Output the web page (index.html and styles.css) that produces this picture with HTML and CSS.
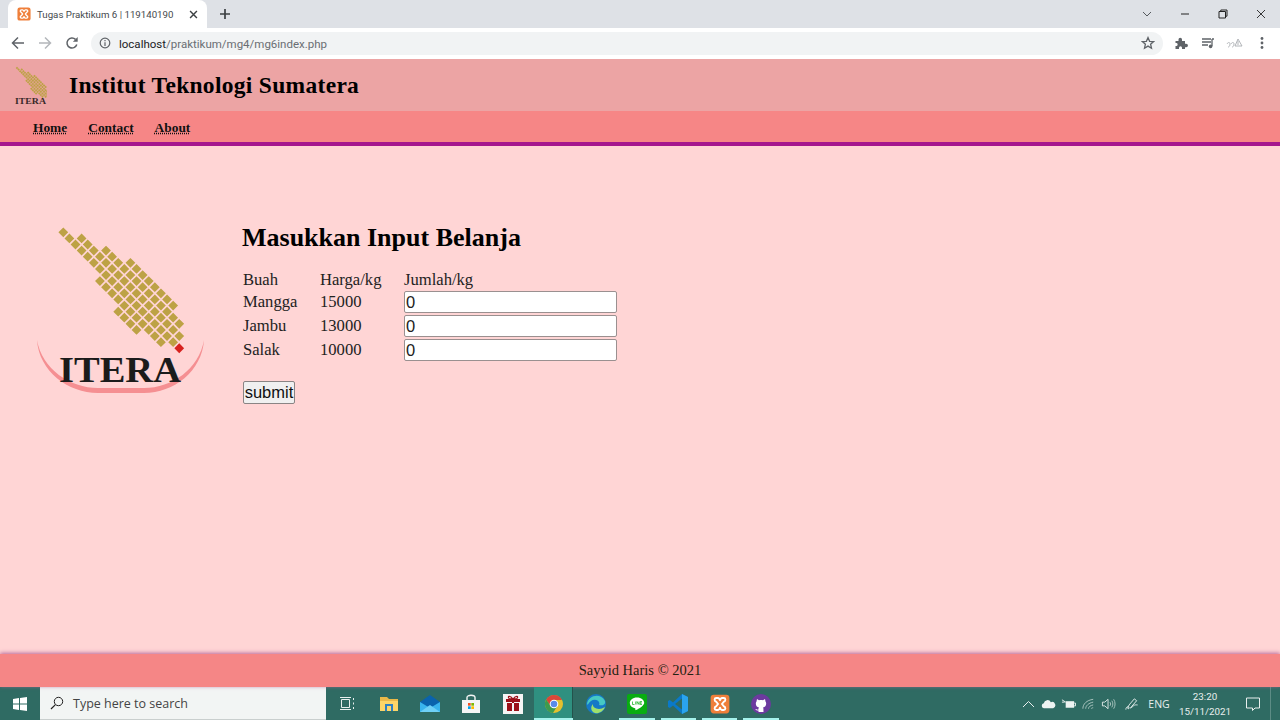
FILE: index.html
```html
<!DOCTYPE html>
<html lang="id">
<head>
<meta charset="utf-8">
<title>Tugas Praktikum 6 | 119140190</title>
<link rel="stylesheet" href="styles.css">
</head>
<body>
<svg class="defs" width="0" height="0" aria-hidden="true">
  <defs>
    <symbol id="xampp" viewBox="0 0 16 16">
      <rect x="0.5" y="0.5" width="15" height="15" rx="2.5" fill="#ef7f3a"/>
      <path d="M5 3.2H6.5C7.6 3.2 7.6 5 8 5S8.4 3.2 9.5 3.2H11C12.6 3.2 12.9 5.6 11 6.2L9.6 8L11 9.8C12.9 10.4 12.6 12.8 11 12.8H9.5C8.4 12.8 8.4 11 8 11S7.6 12.8 6.5 12.8H5C3.4 12.8 3.1 10.4 5 9.8L6.4 8L5 6.2C3.1 5.6 3.4 3.2 5 3.2Z" fill="none" stroke="#fff" stroke-width="1.5"/>
    </symbol>
    <path id="leafcells" d="M7.6-3H15.4M4.6-2H17.4M1.6-1H18.4M-.4 0H18.4M6.6 1H17.4M10.6 2H14.4" fill="none" stroke="#bda245" stroke-width=".8" stroke-dasharray=".8 .2"/>
  </defs>
</svg>

<div class="tabstrip">
  <div class="tab">
    <svg class="favicon"><use href="#xampp"/></svg>
    <span class="tab-title">Tugas Praktikum 6 | 119140190</span>
    <svg class="tab-close" viewBox="0 0 10 10"><path d="M1.2 1.2L8.8 8.8M8.8 1.2L1.2 8.8" stroke="#3c4043" stroke-width="1.6"/></svg>
  </div>
  <svg class="new-tab" viewBox="0 0 12 12"><path d="M6 1V11M1 6H11" stroke="#3c4043" stroke-width="1.7"/></svg>
  <div class="win-controls">
    <svg class="win-btn chevron" viewBox="0 0 10 10"><path d="M1 3L5 7L9 3" fill="none" stroke="#55595e" stroke-width="1"/></svg>
    <svg class="win-btn" viewBox="0 0 10 10"><path d="M1 5H9" stroke="#222" stroke-width="1"/></svg>
    <svg class="win-btn" viewBox="0 0 10 10"><path d="M1 2.5H7.5V9H1ZM2.8 2.5V1H9V7.2H7.5" fill="none" stroke="#222" stroke-width="1"/></svg>
    <svg class="win-btn" viewBox="0 0 10 10"><path d="M1 1L9 9M9 1L1 9" stroke="#222" stroke-width=".9"/></svg>
  </div>
</div>

<div class="toolbar">
  <svg class="nav-ico" viewBox="0 0 14 14"><path d="M13 7H2M7 1.5L1.5 7L7 12.5" fill="none" stroke="#5f6368" stroke-width="1.5"/></svg>
  <svg class="nav-ico" viewBox="0 0 14 14"><path d="M1 7H12M7 1.5L12.5 7L7 12.5" fill="none" stroke="#b4b7bb" stroke-width="1.5"/></svg>
  <svg class="nav-ico" viewBox="0 0 14 14"><path d="M11.8 8.5A5 5 0 1 1 10.5 3.4" fill="none" stroke="#5f6368" stroke-width="1.5"/><path d="M12.7 1V5.8H7.9Z" fill="#5f6368"/></svg>
  <div class="omnibox">
    <svg class="info" viewBox="0 0 12 12"><circle cx="6" cy="6" r="4.8" fill="none" stroke="#5f6368" stroke-width="1.2"/><path d="M6 5.2V9M6 3V4.3" stroke="#5f6368" stroke-width="1.2"/></svg>
    <span class="url"><span class="host">localhost</span>/praktikum/mg4/mg6index.php</span>
    <svg class="star" viewBox="0 0 14 14"><path d="M7 1.6L8.6 5.3L12.6 5.6L9.6 8.2L10.5 12.2L7 10.1L3.5 12.2L4.4 8.2L1.4 5.6L5.4 5.3Z" fill="none" stroke="#5f6368" stroke-width="1.3"/></svg>
  </div>
  <div class="ext">
    <svg class="ext-ico" viewBox="0 0 14 14"><path d="M1.5 5H4.5V3.6A1.7 1.7 0 0 1 8 3.6V5H11V7.7H12.2A1.7 1.7 0 0 1 12.2 11.2H11V13H8V11.8A1.5 1.5 0 0 0 5 11.8V13H1.5V10H2.6A1.6 1.6 0 0 0 2.6 7H1.5Z" fill="#5f6368"/></svg>
    <svg class="ext-ico" viewBox="0 0 14 14"><path d="M1 3H10M1 6H10M1 9H7" stroke="#5f6368" stroke-width="1.3"/><path d="M11 3V10" stroke="#5f6368" stroke-width="1.3"/><circle cx="9.6" cy="10.4" r="1.8" fill="#5f6368"/><path d="M11 3H13" stroke="#5f6368" stroke-width="1.3"/></svg>
    <svg class="ext-ico wide" viewBox="0 0 18 14"><path d="M1 8C2 6 4 6 4 8S3 11 2 11M5 8C6 6 8 6 8 8S7 11 6 11M9 10L12 3L16 10ZM12 5V9" fill="none" stroke="#a9adb1" stroke-width=".9"/></svg>
    <svg class="ext-ico" viewBox="0 0 14 14"><circle cx="7" cy="2.5" r="1.4" fill="#5f6368"/><circle cx="7" cy="7" r="1.4" fill="#5f6368"/><circle cx="7" cy="11.5" r="1.4" fill="#5f6368"/></svg>
  </div>
</div>

<header class="site-head">
  <svg class="head-logo" viewBox="0 0 32 40">
    <use href="#leafcells" transform="translate(2 2) rotate(45) scale(2.25)"/>
    <text class="head-logo-text" x="0" y="38" textLength="31" lengthAdjust="spacingAndGlyphs">ITERA</text>
  </svg>
  <h1 class="site-title">Institut Teknologi Sumatera</h1>
</header>
<nav class="site-nav">
  <a class="nav-link" href="#">Home</a>
  <a class="nav-link" href="#">Contact</a>
  <a class="nav-link" href="#">About</a>
</nav>

<main class="content">
  <svg class="logo" viewBox="0 0 170 170">
    <path d="M1 114C3 145 32 167 62 167H108C138 167 166 145 168 114C163 143 136 162 108 162H62C34 162 6 143 1 114Z" fill="#f58f92"/>
    <use href="#leafcells" transform="translate(27.3 6.3) rotate(45) scale(8.63)"/>
    <rect x="-.4" y="-.4" width=".8" height=".8" fill="#d7221f" transform="translate(27.3 6.3) rotate(45) scale(8.63) translate(19 0)"/>
    <text class="logo-text" x="23" y="156" textLength="122" lengthAdjust="spacingAndGlyphs">ITERA</text>
  </svg>
  <form class="belanja">
    <h2 class="form-title">Masukkan Input Belanja</h2>
    <table class="items">
      <tr><td class="c1 head-cell">Buah</td><td class="c2 head-cell">Harga/kg</td><td class="head-cell">Jumlah/kg</td></tr>
      <tr><td>Mangga</td><td>15000</td><td><input class="qty" type="text" value="0"></td></tr>
      <tr><td>Jambu</td><td>13000</td><td><input class="qty" type="text" value="0"></td></tr>
      <tr><td>Salak</td><td>10000</td><td><input class="qty" type="text" value="0"></td></tr>
    </table>
    <button class="submit" type="button">submit</button>
  </form>
</main>

<footer class="site-foot">Sayyid Haris © 2021</footer>

<div class="taskbar">
  <div class="start">
    <svg class="win-logo" viewBox="0 0 14 14"><path d="M0 2L6 1.1V6.6H0ZM7 1L14 0V6.6H7ZM0 7.4H6V12.9L0 12ZM7 7.4H14V14L7 13Z" fill="#fff"/></svg>
  </div>
  <div class="search">
    <svg class="search-ico" viewBox="0 0 14 14"><circle cx="8.5" cy="5.5" r="4.2" fill="none" stroke="#222" stroke-width="1"/><path d="M5.4 8.6L1 13" stroke="#222" stroke-width="1.2"/></svg>
    <span class="search-text">Type here to search</span>
  </div>
  <div class="task-items">
    <div class="task"><svg class="task-ico" viewBox="0 0 16 16"><path d="M2.5 3.5H10.5V11.500H2.500ZM1 1.500H12M1 13.500H12M14.500 2V4M14.500 6.500V8.500M14.500 11V13" fill="none" stroke="#e8efee" stroke-width="1"/></svg></div>
    <div class="task"><svg class="task-ico big" viewBox="0 0 20 20"><path d="M1 3H8L10 5H19V17H1Z" fill="#e9b949"/><path d="M1 7H19V17H1Z" fill="#fbd568"/><path d="M6 10H14V17H12V12H8V17H6Z" fill="#2b80c4"/></svg></div>
    <div class="task"><svg class="task-ico big" viewBox="0 0 20 20"><path d="M0 8L10 1L20 8V18H0Z" fill="#0a63ad"/><path d="M0 8L10 14L20 8V18H0Z" fill="#39b4ee"/><path d="M0 18L10 11L20 18Z" fill="#6fd0f7"/></svg></div>
    <div class="task"><svg class="task-ico big" viewBox="0 0 20 20"><path d="M1 6H19V19H1Z" fill="#f4f5f5"/><path d="M6 6V3.500C6 .5 14 .5 14 3.500V6" fill="none" stroke="#f4f5f5" stroke-width="1.400"/><path d="M7 9H9.700V11.700H7Z" fill="#f25022"/><path d="M10.300 9H13V11.700H10.300Z" fill="#7fba00"/><path d="M7 12.300H9.700V15H7Z" fill="#00a4ef"/><path d="M10.300 12.300H13V15H10.300Z" fill="#ffb900"/></svg></div>
    <div class="task"><svg class="task-ico big" viewBox="0 0 20 20"><path d="M0 0H20V20H0Z" fill="#f5f5f5"/><path d="M3 5H17V8H11V9H16V17H11V9H9V17H4V9H9V8H3Z" fill="#9b1018"/><path d="M10 5C7 1 4 2 6 4.500L10 5C13 1 16 2 14 4.500Z" fill="none" stroke="#9b1018" stroke-width="1.200"/></svg></div>
    <div class="task active"><svg class="task-ico big" viewBox="0 0 20 20"><circle cx="10" cy="10" r="9" fill="#e3c02f"/><path d="M10 1A9 9 0 0 0 2.200 5.500L6.200 12L10 6H18A9 9 0 0 0 10 1Z" fill="#d8483a"/><path d="M2.200 5.500A9 9 0 0 0 9 19L12.900 12.500H7Z" fill="#3e9b4d"/><circle cx="10" cy="10" r="4.300" fill="#fff"/><circle cx="10" cy="10" r="3.300" fill="#5a8be8"/></svg></div>
    <div class="task"><svg class="task-ico big" viewBox="0 0 20 20"><circle cx="10" cy="10" r="10" fill="#1678c6"/><path d="M1 10C2 2 14-2 19 7C20 10 17 12 13 11C15 7 9 4 5 7C2 9 2 12 1 10Z" fill="#46c9c4"/><path d="M19 13C17 18 12 20 9 19C5 18 4 13 7 10C6 14 13 17 19 13Z" fill="#9fe06c"/></svg></div>
    <div class="task on"><svg class="task-ico big" viewBox="0 0 20 20"><rect width="20" height="20" rx="2" fill="#08ad11"/><path d="M10 3.500C5.600 3.500 2.800 6 2.800 9.100C2.800 11.800 5 13.800 8 14.300C8.600 14.500 8.300 15.800 8.400 16.200C9.500 16.100 14 13.400 15.600 11.700C16.700 10.600 17.200 9.800 17.200 9.100C17.200 6 14.400 3.500 10 3.500Z" fill="#fff"/><path d="M5.500 7.500V10.500H7.500M8.700 7.500V10.500M10 10.500V7.500L12 10.500V7.500M15 7.500H13.200V10.500H15M13.200 9H15" fill="none" stroke="#08ad11" stroke-width=".7"/></svg></div>
    <div class="task on"><svg class="task-ico big" viewBox="0 0 20 20"><path d="M14 0L20 3V17L14 20L5 11.500L1.800 14L0 13V7L1.800 6L5 8.500Z" fill="#0a79c9"/><path d="M14 4.500V15.500L7 10Z" fill="#2f6b63"/><path d="M14 0L20 3V17L14 20Z" fill="#2aa4ee"/></svg></div>
    <div class="task on"><svg class="task-ico big"><use href="#xampp"/></svg></div>
    <div class="task on"><svg class="task-ico big" viewBox="0 0 20 20"><circle cx="10" cy="10" r="10" fill="#6c3a9f"/><path d="M6 5L8 6.200C9.300 5.900 10.700 5.900 12 6.200L14 5L14.500 7.500C16 9.500 15 13 12 13.500C12.500 14 12.500 14.500 12.500 18H7.500V16.500C5.500 17 5 15.500 4.200 15C5.500 15 6 16 7.500 15.500C7.500 14.500 7.500 14 8 13.500C5 13 4 9.500 5.500 7.500Z" fill="#fff"/></svg></div>
  </div>
  <div class="tray">
    <div class="tray-item"><svg class="tray-ico" viewBox="0 0 14 14"><path d="M1.500 10L7 4.500L12.500 10" fill="none" stroke="#e8efee" stroke-width="1"/></svg></div>
    <div class="tray-item"><svg class="tray-ico" viewBox="0 0 16 14"><path d="M3 11.500A2.700 2.700 0 0 1 3 6.200A4 4 0 0 1 10.500 5A3.200 3.200 0 0 1 13 11.500Z" fill="#edf2f1"/></svg></div>
    <div class="tray-item"><svg class="tray-ico" viewBox="0 0 16 14"><path d="M5 4H14V11H5Z" fill="#edf2f1"/><path d="M14 6H15.500V9H14M1 2.500L5 5M1 5H4" fill="none" stroke="#edf2f1" stroke-width="1"/></svg></div>
    <div class="tray-item"><svg class="tray-ico" viewBox="0 0 16 14"><path d="M2 12C2 7 6 3 13 2M5 12C5 9 8 6 13 5M8 12C8 10 10 8.500 13 8M11 12C11 11.500 12 11 13 11" fill="none" stroke="#b9cfcb" stroke-width=".9"/></svg></div>
    <div class="tray-item"><svg class="tray-ico" viewBox="0 0 16 14"><path d="M1.500 5H4L7.500 2V12L4 9H1.500Z" fill="none" stroke="#dfe9e7" stroke-width="1"/><path d="M9.500 5C10.500 6 10.500 8 9.500 9M11.500 3.500C13 5.500 13 8.500 11.500 10.500M13.500 2C15.500 5 15.500 9 13.500 12" fill="none" stroke="#b9cfcb" stroke-width=".9"/></svg></div>
    <div class="tray-item pen"><svg class="tray-ico" viewBox="0 0 16 14"><path d="M2 13C2 11 3 10 4 10C6 10 6 12 4.500 12C3 12 5 8 8 5L11 1.500L13.500 3.500L7 11C6 12 8 11 10 9C11.500 7.500 13 8 14.500 8" fill="none" stroke="#e8efee" stroke-width="1"/></svg></div>
    <span class="lang">ENG</span>
    <div class="clock"><span>23:20</span><span>15/11/2021</span></div>
    <div class="notif"><svg class="notif-ico" viewBox="0 0 16 16"><path d="M1.500 2H14.500V12H10L7.500 14.500V12H1.500Z" fill="none" stroke="#e8efee" stroke-width="1"/></svg></div>
    <div class="show-desktop"></div>
  </div>
</div>
</body>
</html>
```
FILE: styles.css
```css
* { box-sizing: border-box; }
html, body { margin: 0; height: 720px; overflow: hidden; }
body { display: flex; flex-direction: column; background: #ffd5d5; font-family: "Liberation Serif", serif; color: #111; }
.defs { position: absolute; }

.tabstrip { height: 28px; background: #dee1e6; display: flex; align-items: center; flex: none; }
.tab { width: 199px; height: 28px; margin-left: 8px; background: #fff; border-radius: 8px 8px 0 0; display: flex; align-items: center; padding-left: 9px; }
.favicon { width: 14px; height: 14px; flex: none; }
.tab-title { font: 9.7px Roboto, sans-serif; color: #45494d; margin-left: 6px; width: 147px; white-space: nowrap; }
.tab-close { width: 9px; height: 9px; margin-left: 5px; flex: none; }
.new-tab { width: 12px; height: 12px; margin-left: 12px; flex: none; }
.win-controls { margin-left: auto; display: flex; align-items: center; }
.win-btn { width: 10px; height: 10px; margin-right: 28px; flex: none; }
.win-controls .win-btn:last-child { margin-right: 14px; }

.toolbar { height: 31px; background: #fff; display: flex; align-items: center; padding: 0 0 1px 11px; flex: none; }
.nav-ico { width: 14px; height: 14px; margin-right: 13px; flex: none; }
.omnibox { width: 1072px; height: 23px; margin-left: -1px; background: #f1f3f4; border-radius: 12px; display: flex; align-items: center; padding-left: 8px; flex: none; }
.info { width: 12px; height: 12px; flex: none; }
.url { font: 11.5px Roboto, sans-serif; color: #6a6e73; margin: 1px 0 0 8px; white-space: nowrap; }
.host { color: #202124; }
.star { width: 14px; height: 14px; margin-left: auto; margin-right: 8px; flex: none; }
.ext { display: flex; align-items: center; margin-left: 11px; }
.ext-ico { width: 14px; height: 14px; margin-right: 13px; flex: none; }
.ext-ico.wide { width: 18px; margin-right: 11px; margin-left: -2px; }

.site-head { height: 52px; background: #eca4a4; display: flex; align-items: center; padding-left: 15px; flex: none; }
.head-logo { width: 32px; height: 40px; flex: none; margin-top: 1px; }
.head-logo-text { font: bold 7.5px "Liberation Serif", serif; fill: #3a2a2a; }
.site-title { margin: 0 0 0 22px; font: bold 23.5px "Liberation Serif", serif; letter-spacing: .3px; color: #000; white-space: nowrap; }
.site-nav { height: 35px; background: #f68686; border-bottom: 4px solid #a5168e; display: flex; align-items: center; gap: 21px; padding: 2px 0 0 33px; flex: none; }
.nav-link { font: bold 13.4px "Liberation Serif", serif; color: #111; text-decoration: underline dotted; }

.content { flex: 1; display: flex; align-items: flex-start; padding: 80px 0 0 36px; min-height: 0; }
.logo { width: 170px; height: 170px; flex: none; }
.logo-text { font: bold 36px "Liberation Serif", serif; fill: #1b1b1b; }
.belanja { margin-left: 37px; }
.form-title { margin: -3px 0 15px -1px; font: bold 26px "Liberation Serif", serif; color: #000; line-height: 29px; }
.items { border-collapse: separate; border-spacing: 0 2px; font-size: 16.6px; color: #222; margin-bottom: 18px; }
.items td { padding: 0; line-height: 20px; }
.items .head-cell { padding-top: 2px; line-height: 18px; }
.c1 { width: 77px; }
.c2 { width: 84px; }
.qty { display: block; width: 213px; height: 22px; padding: 0 1px; border: 1px solid #9a9090; border-radius: 2px; font: 16.5px "Liberation Sans", sans-serif; color: #222; background: #fff; }
.submit { display: block; width: 52px; height: 23px; padding: 0; border: 1px solid #8a8484; border-radius: 2px; background: #f0f0f0; font: 16.5px "Liberation Sans", sans-serif; color: #111; }

.site-foot { height: 33px; background: #f58686; box-shadow: 0 -1px 4px #b8689a; flex: none; display: flex; align-items: center; justify-content: center; font-size: 14.5px; color: #221; position: relative; }

.taskbar { height: 33px; background: #2f6b63; display: flex; flex: none; }
.start { width: 40px; display: flex; align-items: center; justify-content: center; flex: none; }
.win-logo { width: 14px; height: 14px; }
.search { width: 286px; background: #f2f5f4; border-bottom: 1px solid #c9cfce; display: flex; align-items: center; padding-left: 10px; flex: none; }
.search-ico { width: 14px; height: 14px; flex: none; }
.search-text { font: 12.5px "Open Sans", sans-serif; color: #444; margin-left: 9px; white-space: nowrap; }
.task-items { display: flex; flex: none; margin-left: .5px; }
.task { width: 41.4px; display: flex; align-items: center; justify-content: center; position: relative; flex: none; }
.task-ico { width: 16px; height: 16px; position: relative; }
.task-ico.big { width: 20px; height: 20px; }
.task.active::before { content: ""; position: absolute; left: 1px; right: 2px; top: 0; bottom: 0; background: #2f9080; border-right: 1px solid #24524c; }
.task.active::after, .task.on::after { content: ""; position: absolute; left: 3px; right: 3px; bottom: 0; height: 2px; background: #a6f2ec; }
.task.active::after { left: 1px; right: 2px; }
.tray { margin-left: auto; display: flex; align-items: center; height: 33px; }
.tray-item { width: 20px; display: flex; align-items: center; justify-content: center; flex: none; }
.tray-ico { width: 15px; height: 14px; }
.pen { margin-left: 3px; }
.lang { width: 30px; margin-left: 3px; text-align: center; font: 10.5px "Open Sans", sans-serif; color: #e8efee; flex: none; }
.clock { width: 60px; margin-left: 1px; display: flex; flex-direction: column; align-items: center; gap: 3px; padding-top: 1px; font: 9.8px/12px Roboto, sans-serif; color: #e8efee; flex: none; }
.notif { width: 35px; display: flex; justify-content: center; flex: none; }
.notif-ico { width: 16px; height: 16px; }
.show-desktop { width: 10px; height: 33px; border-left: 1px solid #5c8c85; flex: none; }
```
